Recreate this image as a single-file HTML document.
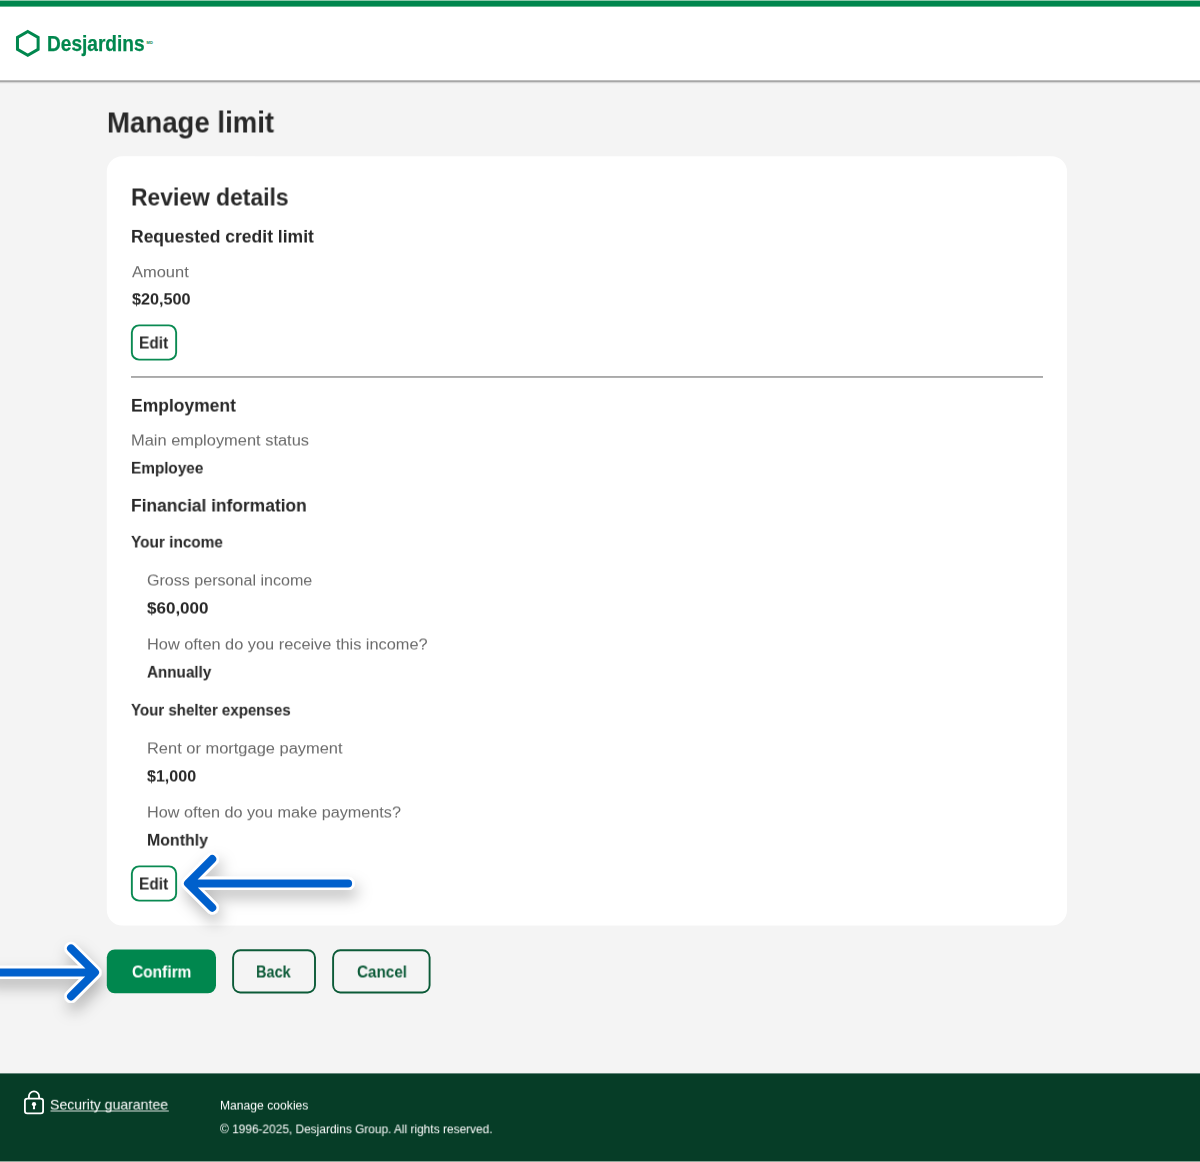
<!DOCTYPE html>
<html lang="en">
<head>
<meta charset="utf-8">
<title>Manage limit</title>
<style>
*{box-sizing:border-box;margin:0;padding:0}
html,body{width:1200px;height:1162px;overflow:hidden}
body{position:relative;background:#f4f4f4;font-family:"Liberation Sans",sans-serif;color:#2f2f2f}
.abs{position:absolute}
.t{position:absolute;white-space:nowrap;line-height:1;font-size:16px}
.b{font-weight:bold;color:#282828}
.g{color:#6a6a6a}
.w{color:#fff}
.row{position:absolute;left:0;width:1200px;height:1px}
#header{left:0;top:0;width:1200px;height:80px;background:#fff}
#footer{left:0;top:1074px;width:1200px;height:87px;background:#063d27}
</style>
</head>
<body>
<div class="abs" id="header"></div>
<div class="row" style="top:0;background:#8cc9ab"></div>
<div class="row" style="top:1px;height:5px;background:#00874e"></div>
<div class="row" style="top:6px;background:#63b790"></div>
<div class="row" style="top:80px;background:#bdbdbd"></div>
<div class="row" style="top:81px;background:#a6a6a6"></div>
<div class="row" style="top:82px;background:#d5d5d5"></div>
<div class="row" style="top:83px;background:#eeeeee"></div>
<div class="abs" id="footer"></div>
<div class="row" style="top:1073px;background:#64867a"></div>
<div class="row" style="top:1161px;background:#8da698"></div>

<svg class="abs" id="shapes" style="left:0;top:0" width="1200" height="1162" viewBox="0 0 1200 1162">
  <defs>
    <filter id="sh" x="-20%" y="-40%" width="150%" height="200%">
      <feDropShadow dx="3" dy="8" stdDeviation="7.500" flood-color="#000" flood-opacity="0.270"/>
    </filter>
  </defs>
  <!-- logo hexagon -->
  <polygon points="27.800,31.430 38.120,37.390 38.120,49.310 27.800,55.270 17.480,49.310 17.480,37.390" fill="none" stroke="#00874e" stroke-width="3" stroke-linejoin="miter"/>
  <!-- card -->
  <rect x="106.800" y="156.300" width="960.200" height="769.200" rx="15.500" fill="#fff"/>
  <rect x="131" y="376" width="912" height="1.900" fill="#a9a9a9"/>
  <!-- edit 1 -->
  <rect x="131.850" y="325.350" width="44.300" height="34.300" rx="7.200" fill="#fff" stroke="#0a8a52" stroke-width="1.900"/>
  <!-- arrows -->
  <g filter="url(#sh)" fill="none" stroke-linecap="round" stroke-linejoin="round">
    <path d="M348.100 883.400H189M212.250 859.100L188 883.400L212.250 907.700" stroke="#fff" stroke-width="13.400"/>
    <path d="M348.100 883.400H189M212.250 859.100L188 883.400L212.250 907.700" stroke="#0560cc" stroke-width="8"/>
  </g>
  <g filter="url(#sh)" fill="none" stroke-linecap="round" stroke-linejoin="round">
    <path d="M-12 972.400H94M71 948.400L95 972.400L71 996.400" stroke="#fff" stroke-width="13.400"/>
    <path d="M-12 972.400H94M71 948.400L95 972.400L71 996.400" stroke="#0560cc" stroke-width="8"/>
  </g>
  <!-- edit 2 -->
  <rect x="131.850" y="866.350" width="44.300" height="34.300" rx="7.200" fill="#fff" stroke="#0a8a52" stroke-width="1.900"/>
  <!-- big buttons -->
  <rect x="106.800" y="949.400" width="109.200" height="43.900" rx="8" fill="#00874e"/>
  <rect x="233.100" y="950.250" width="81.900" height="42.200" rx="7.200" fill="none" stroke="#0b5a37" stroke-width="1.900"/>
  <rect x="333.100" y="950.250" width="96.500" height="42.200" rx="7.200" fill="none" stroke="#0b5a37" stroke-width="1.900"/>
  <!-- lock -->
  <g fill="none" stroke="#fff" stroke-width="1.800">
    <rect x="24.900" y="1098.700" width="18.200" height="14.600" rx="2.400"/>
    <path d="M28.900 1098.700V1096.500a5.100 5.100 0 0 1 10.200 0V1098.700"/>
  </g>
  <circle cx="34" cy="1104.200" r="2.100" fill="#fff"/>
  <path d="M33.200 1104.500H34.800L35.100 1109.200H32.900Z" fill="#fff"/>
  <!-- underline -->
  <rect x="50.500" y="1110.300" width="118.300" height="1.400" fill="#fff" fill-opacity="0.600"/>
</svg>

<div class="t " id="logo" style="left:47.31px;top:34px;font-size:21.5px;transform-origin:0 17px;transform:scale(0.8873,1.0);font-weight:bold;color:#00874e;-webkit-text-stroke:0.25px #00874e">Desjardins</div>
<div class="t" id="md" style="left:146.500px;top:40.500px;font-size:4px;font-weight:bold;color:#00874e;letter-spacing:0.200px">MD</div>
<div class="t b" id="h1" style="left:107.05px;top:108px;font-size:29.2px;transform-origin:0 24px;will-change:transform;transform:translateY(0.50px) scale(0.9451,1.0)">Manage limit</div>
<div class="t b" id="h2" style="left:130.96px;top:185px;font-size:24.4px;transform-origin:0 20px;will-change:transform;transform:translateY(0.50px) scale(0.9373,1.0)">Review details</div>
<div class="t b" id="s1" style="left:131.00px;top:228px;font-size:17.5px;transform-origin:0 14px;will-change:transform;transform:translateY(0.50px) scale(1.0000,0.97)">Requested credit limit</div>
<div class="t g" id="l1" style="left:131.70px;top:264px;font-size:16px;transform-origin:0 13px;will-change:transform;transform:translateY(0.25px) scale(1.0288,0.92)">Amount</div>
<div class="t b" id="v1" style="left:131.70px;top:291px;font-size:16px;transform-origin:0 13px;will-change:transform;transform:translateY(0.50px) scale(1.0132,0.94)">$20,500</div>
<div class="t b" id="e1t" style="left:139.04px;top:335px;font-size:16px;transform-origin:0 13px;will-change:transform;transform:translateY(0.50px) scale(0.9635,1.0)">Edit</div>
<div class="t b" id="s2" style="left:131.00px;top:397px;font-size:17.5px;transform-origin:0 14px;will-change:transform;transform:translateY(0.50px) scale(0.9982,0.97)">Employment</div>
<div class="t g" id="l2" style="left:130.97px;top:432px;font-size:16px;transform-origin:0 13px;will-change:transform;transform:translateY(0.50px) scale(1.0266,0.92)">Main employment status</div>
<div class="t b" id="v2" style="left:131.04px;top:460px;font-size:16px;transform-origin:0 13px;will-change:transform;transform:translateY(0.50px) scale(0.9560,0.97)">Employee</div>
<div class="t b" id="s3" style="left:131.01px;top:497px;font-size:17.5px;transform-origin:0 14px;will-change:transform;transform:translateY(0.50px) scale(0.9928,0.97)">Financial information</div>
<div class="t b" id="s4" style="left:130.90px;top:534px;font-size:16px;transform-origin:0 13px;will-change:transform;transform:translateY(0.50px) scale(0.9601,0.97)">Your income</div>
<div class="t g" id="l3" style="left:147.00px;top:572px;font-size:16px;transform-origin:0 13px;will-change:transform;transform:translateY(0.50px) scale(1.0048,0.92)">Gross personal income</div>
<div class="t b" id="v3" style="left:147.00px;top:600px;font-size:16px;transform-origin:0 13px;will-change:transform;transform:translateY(0.50px) scale(1.0632,0.94)">$60,000</div>
<div class="t g" id="l4" style="left:146.98px;top:636px;font-size:16px;transform-origin:0 13px;will-change:transform;transform:translateY(0.50px) scale(1.0211,0.92)">How often do you receive this income?</div>
<div class="t b" id="v4" style="left:146.60px;top:664px;font-size:16px;transform-origin:0 13px;will-change:transform;transform:translateY(0.50px) scale(0.9503,0.97)">Annually</div>
<div class="t b" id="s5" style="left:130.60px;top:702px;font-size:16px;transform-origin:0 13px;will-change:transform;transform:translateY(0.50px) scale(0.9413,0.97)">Your shelter expenses</div>
<div class="t g" id="l5" style="left:146.97px;top:740px;font-size:16px;transform-origin:0 13px;will-change:transform;transform:translateY(0.50px) scale(1.0275,0.92)">Rent or mortgage payment</div>
<div class="t b" id="v5" style="left:147.00px;top:768px;font-size:16px;transform-origin:0 13px;will-change:transform;transform:translateY(0.50px) scale(1.0033,0.94)">$1,000</div>
<div class="t g" id="l6" style="left:146.99px;top:804px;font-size:16px;transform-origin:0 13px;will-change:transform;transform:translateY(0.50px) scale(1.0124,0.92)">How often do you make payments?</div>
<div class="t b" id="v6" style="left:147.01px;top:832px;font-size:16px;transform-origin:0 13px;will-change:transform;transform:translateY(0.50px) scale(0.9930,0.97)">Monthly</div>
<div class="t b" id="e2t" style="left:139.04px;top:876px;font-size:16px;transform-origin:0 13px;will-change:transform;transform:translateY(0.50px) scale(0.9635,1.0)">Edit</div>
<div class="t " id="bconft" style="left:132.10px;top:964px;font-size:16px;transform-origin:0 13px;will-change:transform;transform:translateY(0.50px) scale(0.9681,1.0);font-weight:bold;color:#fff">Confirm</div>
<div class="t " id="bbackt" style="left:256.19px;top:964px;font-size:16px;transform-origin:0 13px;will-change:transform;transform:translateY(0.50px) scale(0.9076,1.0);font-weight:bold;color:#0b5a37">Back</div>
<div class="t " id="bcanct" style="left:356.60px;top:964px;font-size:16px;transform-origin:0 13px;will-change:transform;transform:translateY(0.50px) scale(0.9515,1.0);font-weight:bold;color:#0b5a37">Cancel</div>
<div class="t w" id="sec" style="left:50.20px;top:1097px;font-size:14.1px;transform-origin:0 12px;will-change:transform;transform:translateY(0.50px) scale(0.9969,0.97)">Security guarantee</div>
<div class="t w" id="cook" style="left:219.60px;top:1099px;font-size:12px;transform-origin:0 10px;will-change:transform;transform:translateY(0.50px) scale(1.0116,0.97)">Manage cookies</div>
<div class="t w" id="copy" style="left:220.20px;top:1123px;font-size:12px;transform-origin:0 10px;will-change:transform;transform:translateY(0.25px) scale(0.9909,0.97)">© 1996-2025, Desjardins Group. All rights reserved.</div>
</body>
</html>
